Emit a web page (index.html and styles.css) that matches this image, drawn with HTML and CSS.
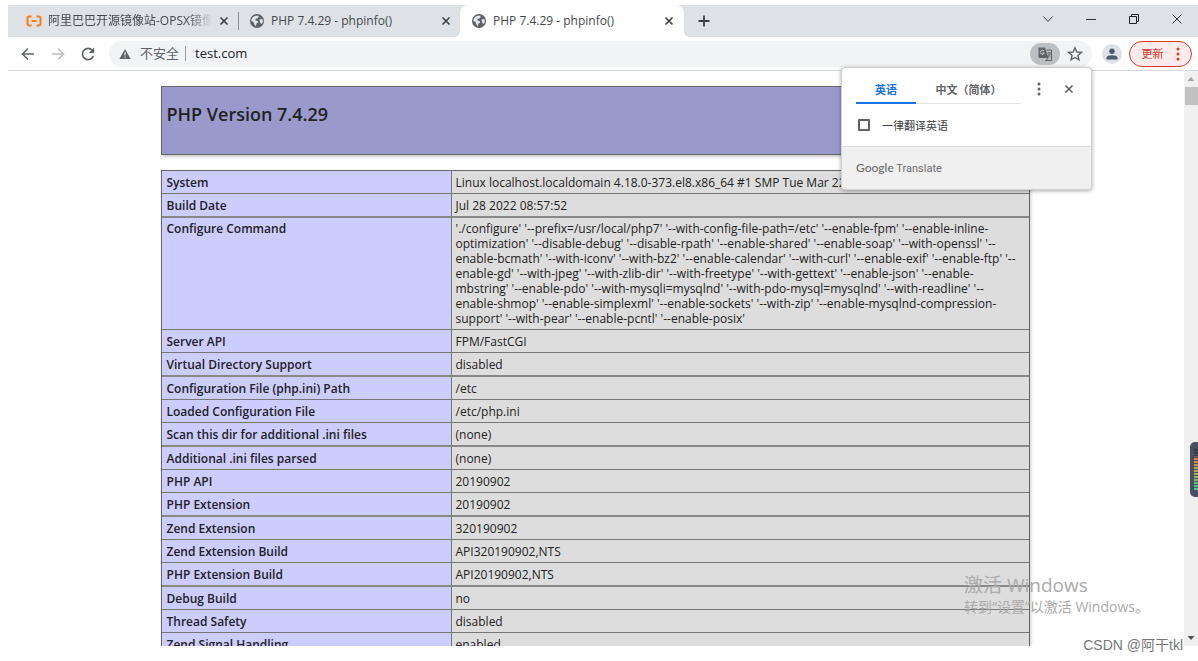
FILE: index.html
```html
<!DOCTYPE html>
<html lang="zh-CN">
<head>
<meta charset="utf-8">
<title>PHP 7.4.29 - phpinfo()</title>
<link rel="stylesheet" href="styles.css">
</head>
<body>
<svg class="defs" aria-hidden="true">
  <symbol id="globe" viewBox="0 0 16 16"><circle cx="8" cy="8" r="7" fill="#5f6368"/><path d="M3 5.2 4.6 3.5 8.2 2.4 9.8 3.4 8.9 5.3 6.6 5.8 6.3 7.6 8.6 8 9.3 9.4 7.4 10.6 7 13.2 5.4 11.6 4.6 9 2.2 8zM10.4 6.4 13.2 6 14 8.6 12.4 11.2 11.2 9.4z" fill="#e4e7ea"/></symbol>
  <symbol id="cross" viewBox="0 0 10 10"><path d="M1.5 1.5 8.5 8.5M8.5 1.5 1.5 8.5" fill="none" stroke="currentColor" stroke-width="1.6"/></symbol>
  <symbol id="dots" viewBox="0 0 4 14"><g fill="currentColor"><circle cx="2" cy="2" r="1.5"/><circle cx="2" cy="7" r="1.5"/><circle cx="2" cy="12" r="1.5"/></g></symbol>
</svg>
<div class="browser">
  <header class="tabstrip">
    <div class="tab tab-first">
      <svg class="ico" viewBox="0 0 16 16"><path d="M5.5 3.5H3.5Q1.5 3.5 1.5 5.5V10.5Q1.5 12.5 3.5 12.5H5.5M10.5 3.5H12.5Q14.5 3.5 14.5 5.5V10.5Q14.5 12.5 12.5 12.5H10.5M5.5 8H10.5" fill="none" stroke="#ff7a12" stroke-width="2"/></svg>
      <span class="title fade">阿里巴巴开源镜像站-OPSX镜像站</span>
      <button class="close" aria-label="关闭"><svg><use href="#cross"/></svg></button>
    </div>
    <div class="tab">
      <svg class="ico"><use href="#globe"/></svg>
      <span class="title">PHP 7.4.29 - phpinfo()</span>
      <button class="close" aria-label="关闭"><svg><use href="#cross"/></svg></button>
    </div>
    <div class="tab active">
      <svg class="ico"><use href="#globe"/></svg>
      <span class="title">PHP 7.4.29 - phpinfo()</span>
      <button class="close" aria-label="关闭"><svg><use href="#cross"/></svg></button>
    </div>
    <button class="newtab" aria-label="新标签页"><svg viewBox="0 0 12 12"><path d="M6 .5V11.5M.5 6H11.5" stroke="#3c4043" stroke-width="1.8"/></svg></button>
    <div class="window-controls">
      <button aria-label="搜索标签页"><svg viewBox="0 0 12 12"><path d="M1.5 3.5 6 8.5 10.5 3.5" fill="none" stroke="#444" stroke-width="1"/></svg></button>
      <button aria-label="最小化"><svg viewBox="0 0 12 12"><path d="M1 6.5H11" stroke="#333"/></svg></button>
      <button aria-label="还原"><svg viewBox="0 0 12 12"><path d="M1.5 3.5H8.5V10.5H1.5zM3.5 3.5V1.5H10.5V8.5H8.5" fill="none" stroke="#222"/></svg></button>
      <button aria-label="关闭窗口"><svg viewBox="0 0 12 12"><path d="M1.5 1.5 10.5 10.5M10.5 1.5 1.5 10.5" stroke="#333"/></svg></button>
    </div>
  </header>

  <nav class="toolbar">
    <div class="nav-buttons">
      <button aria-label="后退"><svg viewBox="0 0 16 16"><path d="M14 8H3M8 2.5 2.5 8 8 13.5" fill="none" stroke="#5f6368" stroke-width="1.6"/></svg></button>
      <button aria-label="前进" disabled><svg viewBox="0 0 16 16"><path d="M2 8H13M8 2.5 13.5 8 8 13.5" fill="none" stroke="#bcbfc3" stroke-width="1.6"/></svg></button>
      <button aria-label="重新加载"><svg viewBox="0 0 16 16"><path d="M13.3 10A5.6 5.6 0 1 1 12.2 4.2" fill="none" stroke="#5f6368" stroke-width="1.7"/><path d="M14.2 1.5V7H8.7z" fill="#5f6368"/></svg></button>
    </div>
    <div class="omnibox">
      <svg class="warn" viewBox="0 0 12 12"><path d="M6 1 11.6 11H.4z" fill="#5f6368"/><path d="M6 4.2V7.6M6 8.5V9.8" stroke="#f1f3f4" stroke-width="1.2"/></svg>
      <label class="insecure" for="url">不安全</label>
      <input id="url" type="text" value="test.com">
      <button class="translate" aria-label="翻译此页"><svg viewBox="0 0 16 16"><path d="M1.5 1.5H8L11.5 12H2.5Q1.5 12 1.5 11z" fill="#5f6368"/><path d="M7.2 5.3A2 2 0 1 0 7.3 7H5.6" fill="none" stroke="#d0d0d0" stroke-width="1"/><path d="M9.3 4H14.5V14.5H8.5L11.5 12" fill="none" stroke="#5f6368"/><path d="M10.5 7H14M12.2 6V7M13.3 7Q12.8 9.5 10.8 11M11 8Q12 10 13.5 11" fill="none" stroke="#5f6368" stroke-width=".9"/></svg></button>
      <button class="star" aria-label="为此标签页添加书签"><svg viewBox="0 0 16 16"><path d="M8 1.8 9.8 6 14.4 6.4 10.9 9.4 12 13.9 8 11.5 4 13.9 5.1 9.4 1.6 6.4 6.2 6z" fill="none" stroke="#5f6368" stroke-width="1.4"/></svg></button>
    </div>
    <button class="avatar" aria-label="个人资料"><svg viewBox="0 0 12 12"><circle cx="6" cy="3.2" r="2.7" fill="#4a5a70"/><path d="M.5 11.5V9.6Q1.3 7.2 6 7.2T11.5 9.6V11.5z" fill="#4a5a70"/></svg></button>
    <button class="update"><span>更新</span><svg><use href="#dots"/></svg></button>
  </nav>

  <div class="viewport">
    <main class="page">
      <div class="php-head"><h1>PHP Version 7.4.29</h1></div>
      <table class="info">
        <tbody>
        <tr><th scope="row">System</th><td class="nowrap">Linux localhost.localdomain 4.18.0-373.el8.x86_64 #1 SMP Tue Mar 22 15</td></tr>
        <tr><th scope="row">Build Date</th><td>Jul 28 2022 08:57:52</td></tr>
        <tr class="command"><th scope="row">Configure Command</th><td class="nowrap">'./configure' '--prefix=/usr/local/php7' '--with-config-file-path=/etc' '--enable-fpm' '--enable-inline-<br>optimization' '--disable-debug' '--disable-rpath' '--enable-shared' '--enable-soap' '--with-openssl' '--<br>enable-bcmath' '--with-iconv' '--with-bz2' '--enable-calendar' '--with-curl' '--enable-exif' '--enable-ftp' '--<br>enable-gd' '--with-jpeg' '--with-zlib-dir' '--with-freetype' '--with-gettext' '--enable-json' '--enable-<br>mbstring' '--enable-pdo' '--with-mysqli=mysqlnd' '--with-pdo-mysql=mysqlnd' '--with-readline' '--<br>enable-shmop' '--enable-simplexml' '--enable-sockets' '--with-zip' '--enable-mysqlnd-compression-<br>support' '--with-pear' '--enable-pcntl' '--enable-posix'</td></tr>
        <tr><th scope="row">Server API</th><td>FPM/FastCGI</td></tr>
        <tr><th scope="row">Virtual Directory Support</th><td>disabled</td></tr>
        <tr><th scope="row">Configuration File (php.ini) Path</th><td>/etc</td></tr>
        <tr><th scope="row">Loaded Configuration File</th><td>/etc/php.ini</td></tr>
        <tr><th scope="row">Scan this dir for additional .ini files</th><td>(none)</td></tr>
        <tr><th scope="row">Additional .ini files parsed</th><td>(none)</td></tr>
        <tr><th scope="row">PHP API</th><td>20190902</td></tr>
        <tr><th scope="row">PHP Extension</th><td>20190902</td></tr>
        <tr><th scope="row">Zend Extension</th><td>320190902</td></tr>
        <tr><th scope="row">Zend Extension Build</th><td>API320190902,NTS</td></tr>
        <tr><th scope="row">PHP Extension Build</th><td>API20190902,NTS</td></tr>
        <tr><th scope="row">Debug Build</th><td>no</td></tr>
        <tr><th scope="row">Thread Safety</th><td>disabled</td></tr>
        <tr><th scope="row">Zend Signal Handling</th><td>enabled</td></tr>
        </tbody>
      </table>
    </main>
    <div class="scrollbar">
      <svg viewBox="0 0 14 14"><path d="M3.5 9 7 5 10.5 9z" fill="#a3a3a3"/></svg>
      <div class="thumb"></div>
      <svg class="down" viewBox="0 0 14 14"><path d="M3.5 5H10.5L7 9z" fill="#505050"/></svg>
    </div>
  </div>

  <section class="popup" aria-label="翻译">
    <div class="popup-top">
      <div class="langs">
        <button class="lang selected">英语</button><button class="lang">中文（简体）</button>
      </div>
      <button class="more" aria-label="更多"><svg><use href="#dots"/></svg></button>
      <button class="close" aria-label="关闭"><svg><use href="#cross"/></svg></button>
    </div>
    <label class="always"><input type="checkbox"><span>一律翻译英语</span></label>
    <div class="brand"><b>Google</b> Translate</div>
  </section>

  <div class="meter" aria-hidden="true"><i></i></div>
  <div class="activate"><p class="big">激活 Windows</p><p>转到“设置”以激活 Windows。</p></div>
  <div class="credit">CSDN @阿干tkl</div>
</div>
</body>
</html>
```
FILE: styles.css
```css
* { box-sizing: border-box; }
body {
  margin: 0;
  height: 100vh;
  padding: 5px 0 15px 8px;
  background: #fff;
  overflow: hidden;
  font: 12px/15px "Open Sans", "Noto Sans CJK SC", sans-serif;
  color: #222;
}
button {
  display: flex;
  align-items: center;
  justify-content: center;
  flex: none;
  margin: 0;
  padding: 0;
  border: 0;
  background: none;
  color: inherit;
  font: inherit;
}
svg { flex: none; display: block; }
.defs { position: absolute; width: 0; height: 0; }
.browser {
  position: relative;
  display: flex;
  flex-direction: column;
  height: 100%;
}

/* tab strip */
.tabstrip {
  display: flex;
  flex: none;
  height: 32px;
  background: #dee1e6;
  color: #45494d;
}
.tab {
  position: relative;
  display: flex;
  align-items: center;
  gap: 6px;
  width: 221px;
  padding: 0 8px 0 10px;
}
.tab-first {
  width: 231px;
  padding: 0 9px 0 18px;
}
.tab-first::after {
  content: "";
  position: absolute;
  right: 0;
  top: 7px;
  width: 1px;
  height: 18px;
  background: #8b8f94;
}
.ico { width: 16px; height: 16px; }
.title {
  flex: 1;
  min-width: 0;
  overflow: hidden;
  white-space: nowrap;
  font-family: "Open Sans", "Noto Sans CJK SC", sans-serif;
  line-height: 18px;
}
.fade { mask-image: linear-gradient(to right, #000 85%, transparent); }
.close { width: 12px; height: 16px; color: #3c4043; }
.close svg { width: 10px; height: 10px; }
.active {
  width: 224px;
  padding: 0 9px 0 11px;
  border-radius: 8px 8px 0 0;
  background: #fff;
}
.active::before, .active::after {
  content: "";
  position: absolute;
  bottom: 0;
  width: 6px;
  height: 6px;
}
.active::before { left: -6px; background: radial-gradient(circle at 0 0, transparent 6px, #fff 6px); }
.active::after { right: -6px; background: radial-gradient(circle at 100% 0, transparent 6px, #fff 6px); }
.newtab { width: 40px; }
.newtab svg { width: 12px; height: 12px; }
.window-controls { display: flex; margin-left: auto; }
.window-controls button { width: 43px; padding-bottom: 5px; }
.window-controls svg { width: 12px; height: 12px; }

/* toolbar */
.toolbar {
  display: flex;
  align-items: center;
  flex: none;
  height: 34px;
  padding-right: 6px;
  border-bottom: 1px solid #d5d8dc;
}
.nav-buttons { display: flex; padding: 0 6px 0 5px; }
.nav-buttons button { width: 30px; height: 26px; }
.nav-buttons svg { width: 16px; height: 16px; }
.omnibox {
  display: flex;
  align-items: center;
  flex: 1;
  height: 26px;
  padding: 0 9px 0 10px;
  border-radius: 13px;
  background: #f1f3f4;
}
.warn { width: 12px; height: 12px; margin-right: 9px; }
.insecure {
  padding-right: 6px;
  border-right: 1px solid #9a9da1;
  color: #5f6368;
  font-size: 13px;
}
.omnibox input {
  flex: 1;
  min-width: 0;
  padding: 0 9px 1px;
  border: 0;
  outline: 0;
  background: none;
  color: #202124;
  font: 13px/18px "Open Sans", sans-serif;
}
.translate {
  width: 30px;
  height: 22px;
  margin-right: 7px;
  border-radius: 11px;
  background: #bdc0c2;
}
.translate svg, .star svg { width: 16px; height: 16px; }
.avatar {
  width: 20px;
  height: 20px;
  margin: 0 7px 0 10px;
  border-radius: 50%;
  background: #dee1e6;
}
.avatar svg { width: 12px; height: 12px; }
.update {
  gap: 12px;
  width: 63px;
  height: 26px;
  border: 1px solid #d93a33;
  border-radius: 13px;
  background: #fcebe9;
  color: #d2362d;
  font-size: 11px;
}
.update svg { width: 4px; height: 14px; }

/* page */
.viewport {
  display: flex;
  flex: 1;
  min-height: 0;
  overflow: hidden;
}
.page { flex: 1; padding: 15px 11px 0 9px; }
.php-head, .info {
  width: 100%;
  max-width: 869px;
  margin: 0 auto 15px;
  border: 1px solid #666;
  box-shadow: 1px 2px 3px #ccc;
}
.php-head {
  padding: 16px 5px 29px;
  background: #9999cc;
}
h1 {
  margin: 0;
  font-size: 18px;
  font-weight: 600;
  line-height: 22px;
}
.info {
  table-layout: fixed;
  border-collapse: separate;
  border-spacing: 0;
  border-bottom: 0;
}
.info th, .info td {
  padding: 4px 4px 3px;
  border-bottom: 1px solid #777;
  text-align: left;
  vertical-align: top;
}
.info th {
  width: 290px;
  padding-left: 5px;
  border-right: 1px solid #777;
  background: #ccccff;
  font-weight: 600;
}
.info td { background: #ddd; overflow: hidden; }
.info tr:nth-child(3n+2) > * { border-bottom: 2px solid #888; }
.info .command > * { padding-top: 3px; }
.nowrap { white-space: nowrap; }
.scrollbar {
  display: flex;
  flex-direction: column;
  width: 14px;
  background: #f0f0f0;
}
.scrollbar svg { width: 14px; height: 16px; }
.thumb { height: 18px; margin-left: 1px; background: #c1c1c1; }
.scrollbar .down { margin-top: auto; }

/* translate popup */
.popup {
  position: absolute;
  top: 62px;
  right: 106px;
  width: 251px;
  border: 1px solid #d0d0d0;
  border-radius: 4px;
  background: #fff;
  box-shadow: 0 1px 4px #0005;
  overflow: hidden;
}
.popup-top {
  display: flex;
  align-items: center;
  height: 42px;
  padding: 0 16px 0 14px;
}
.langs {
  display: flex;
  flex: 1;
  height: 27px;
  border-bottom: 1px solid #e2e4e6;
  margin-top: 2px;
}
.lang {
  flex: 1;
  color: #5f6368;
  font-weight: 700;
  font-size: 11px;
}
.lang.selected {
  flex: none;
  width: 60px;
  height: 27px;
  border-bottom: 2px solid #1a73e8;
  color: #1a73e8;
}
.more { width: 36px; margin-right: 6px; color: #5f6368; }
.more svg { width: 4px; height: 14px; }
.popup .close { color: #5f6368; }
.always {
  display: flex;
  align-items: center;
  gap: 12px;
  height: 36px;
  padding: 0 16px 6px;
  font-size: 11px;
  color: #3c4043;
}
.always input {
  appearance: none;
  width: 12px;
  height: 12px;
  margin: 0;
  border: 2px solid #5f6368;
  border-radius: 1px;
}
.brand {
  padding: 13px 14px;
  border-top: 1px solid #ddd;
  background: #f0f0f0;
  color: #6c6c6c;
  font-family: Roboto, sans-serif;
  font-size: 11px;
}
.brand b { font-family: Lato, sans-serif; font-size: 12px; font-weight: 500; }

/* desktop overlays */
.meter {
  position: absolute;
  top: 437px;
  right: 0;
  width: 8px;
  height: 55px;
  padding: 7px 0 7px 4px;
  border-radius: 5px 0 0 5px;
  background: #4a5060;
}
.meter i {
  display: block;
  height: 41px;
  background:
    repeating-linear-gradient(transparent 0 2px, #4a5060 2px 3px),
    linear-gradient(#343a4a 7px, #e07b45 8px, #c5a14a 18px, #a5b55a 25px, #45c8a0);
}
.activate {
  position: absolute;
  right: 50px;
  bottom: 29px;
  width: 184px;
  color: #aaa;
  font-size: 14px;
  line-height: 20px;
  white-space: nowrap;
}
.activate p { margin: 0; }
.activate .big { font-size: 19px; line-height: 24px; }
.credit {
  position: absolute;
  right: 15px;
  bottom: -9px;
  color: #777;
  font: 14px/20px "Liberation Sans", "Noto Sans CJK SC", sans-serif;
}
```
